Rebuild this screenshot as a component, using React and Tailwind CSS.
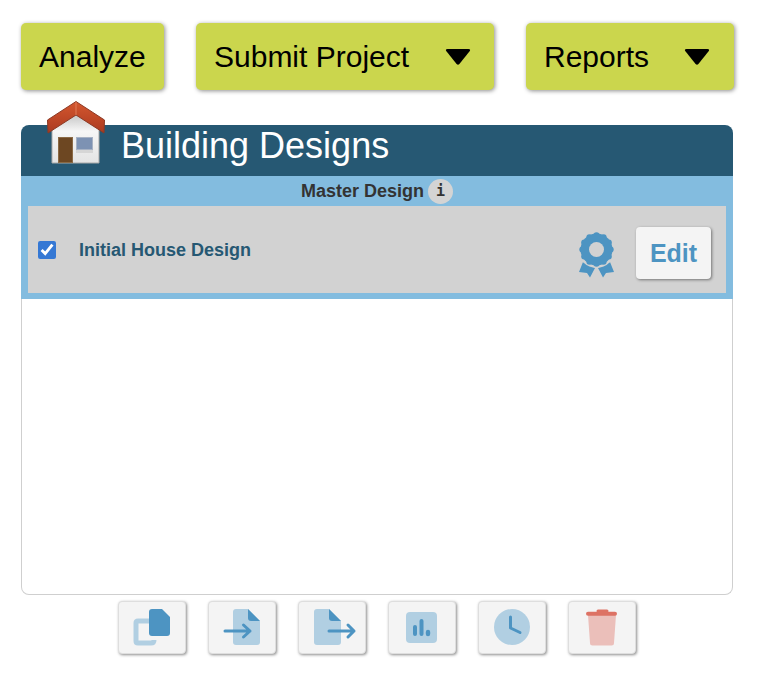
import { Fragment } from 'react'

const FONT = { fontFamily: '"Liberation Sans", Arial, sans-serif' }

function Caret() {
  return (
    <svg width="26" height="18" viewBox="0 0 26 18">
      <path d="M2.5 1 H23.5 Q25.8 1 24.8 3 L14.4 16 Q13 17.4 11.6 16 L1.2 3 Q0.2 1 2.5 1 Z" fill="#000" />
    </svg>
  )
}

function HouseIcon() {
  return (
    <svg width="58" height="64" viewBox="0 0 58 64">
      <defs>
        <linearGradient id="wall" x1="0" y1="0" x2="0" y2="1">
          <stop offset="0" stopColor="#c4c4c4" />
          <stop offset="0.35" stopColor="#f6f6f6" />
          <stop offset="1" stopColor="#e4e4e4" />
        </linearGradient>
        <linearGradient id="roof" x1="0" y1="0" x2="0" y2="1">
          <stop offset="0" stopColor="#d4572f" />
          <stop offset="1" stopColor="#ab3a20" />
        </linearGradient>
      </defs>
      <path d="M5 28 L29 13 L52 28 V62 H5 Z" fill="url(#wall)" stroke="#a9a9a9" strokeWidth="1" />
      <path d="M0.5 19 L29 0.5 L57.5 19 L57 32 L29 14 L1 32 Z" fill="url(#roof)" stroke="#8c3a25" strokeWidth="1" />
      <path d="M29 1 V14" stroke="#e07d58" strokeWidth="1" />
      <rect x="11.5" y="36.5" width="14" height="25" fill="#6d4722" stroke="#8b6a45" strokeWidth="1" />
      <rect x="29.5" y="36.5" width="16" height="12" fill="#7d92b3" stroke="#a7b2c4" strokeWidth="1" />
      <rect x="29" y="49" width="17" height="3" fill="#d6d6d6" />
    </svg>
  )
}

function RibbonIcon() {
  const bumps = Array.from({ length: 12 }, (_, i) => {
    const a = (i / 12) * Math.PI * 2
    return { cx: 17.5 + Math.cos(a) * 14.2, cy: 17.5 + Math.sin(a) * 14.2 }
  })
  return (
    <svg width="35" height="46" viewBox="0 0 35 46">
      <path d="M0 40 L4 30 L16 36 L11 45.5 L8 41 Z" fill="#4d94c2" />
      <path d="M35 40 L31 30 L19 36 L24 45.5 L27 41 Z" fill="#4d94c2" />
      <circle cx="17.5" cy="17.5" r="18.5" fill="#d2d2d2" />
      {bumps.map((b, i) => (
        <circle key={i} cx={b.cx} cy={b.cy} r="3" fill="#4d94c2" />
      ))}
      <circle cx="17.5" cy="17.5" r="16" fill="#4d94c2" />
      <circle cx="17.5" cy="17.5" r="7.5" fill="#d2d2d2" />
    </svg>
  )
}

const LIGHT = '#b1cfe2'
const DARK = '#4d94c2'

// coordinates are relative to the button's outer box
const ICONS = [
  <Fragment key="copy">
    <path d="M31 20 H20 Q18 20 18 22 V40 Q18 42 20 42 H33 Q36 42 36 39" fill="none" stroke={LIGHT} strokeWidth="5" />
    <path d="M34 8 H44 L52 16 V32 Q52 35 49 35 H34 Q31 35 31 32 V11 Q31 8 34 8 Z" fill={DARK} />
  </Fragment>,
  <Fragment key="import">
    <path d="M28 8 H40 L52 20 V41 Q52 44 49 44 H28 Q25 44 25 41 V11 Q25 8 28 8 Z" fill={LIGHT} />
    <path d="M40 8 L52 20 H43 Q40 20 40 17 Z" fill={DARK} />
    <path d="M17 30 H42 M35.5 24 L42 30 L35.5 36" fill="none" stroke={DARK} strokeWidth="3" strokeLinecap="round" strokeLinejoin="round" />
  </Fragment>,
  <Fragment key="export">
    <path d="M19 8 H31 L43 20 V41 Q43 44 40 44 H19 Q16 44 16 41 V11 Q16 8 19 8 Z" fill={LIGHT} />
    <path d="M31 8 L43 20 H34 Q31 20 31 17 Z" fill={DARK} />
    <path d="M31 30 H56 M50 24 L56 30 L50 36" fill="none" stroke={DARK} strokeWidth="3" strokeLinecap="round" strokeLinejoin="round" />
  </Fragment>,
  <Fragment key="chart">
    <rect x="18" y="11" width="31" height="31" rx="4" fill={LIGHT} />
    <path d="M27 26 V33 M33.5 20 V33" stroke={DARK} strokeWidth="4" strokeLinecap="round" />
    <path d="M40 31 V33" stroke={DARK} strokeWidth="4.4" strokeLinecap="round" />
  </Fragment>,
  <Fragment key="clock">
    <circle cx="34" cy="26" r="18" fill={LIGHT} />
    <path d="M32.5 16 V27 L42 31.5" fill="none" stroke={DARK} strokeWidth="3" strokeLinecap="round" strokeLinejoin="round" />
  </Fragment>,
  <Fragment key="trash">
    <path d="M20 14 H48 L46 42 Q46 44.5 43.5 44.5 H24.5 Q22 44.5 22 42 Z" fill="#ebbfba" />
    <path d="M20 12.8 H47" stroke="#dd7264" strokeWidth="4" strokeLinecap="round" />
    <path d="M30 10 H39" stroke="#dd7264" strokeWidth="3" strokeLinecap="round" />
  </Fragment>,
]

function ToolButton({ children }) {
  return (
    <button className="w-[68px] h-[53px] flex items-center justify-center rounded bg-[#f4f4f4] border border-[#dedede] shadow-[1px_1px_3px_rgba(0,0,0,0.45)]">
      <svg width="66" height="51" viewBox="1 1 66 51">{children}</svg>
    </button>
  )
}

export default function App() {
  return (
    <div className="w-[759px] h-[680px] bg-white pl-[21px] pt-[23px]" style={FONT}>
      <div className="flex text-[30px] text-black">
        <button className="w-[143px] h-[67px] flex items-center pl-[18px] rounded-[5px] bg-[#cbd64d] shadow-[1px_1px_4px_rgba(0,0,0,0.45)]">
          Analyze
        </button>
        <button className="w-[298px] h-[67px] ml-[32px] flex items-center justify-between pl-[18px] pr-[23px] rounded-[5px] bg-[#cbd64d] shadow-[1px_1px_4px_rgba(0,0,0,0.45)]">
          Submit Project
          <Caret />
        </button>
        <button className="w-[208px] h-[67px] ml-[32px] flex items-center justify-between pl-[18px] pr-[24px] rounded-[5px] bg-[#cbd64d] shadow-[1px_1px_4px_rgba(0,0,0,0.45)]">
          Reports
          <Caret />
        </button>
      </div>

      <div className="relative w-[712px] mt-[35px]">
        <div className="absolute left-[26px] top-[-24px]">
          <HouseIcon />
        </div>
        <div className="h-[51px] pl-[100px] pb-[10px] flex items-center rounded-t-[8px] bg-[#265873] text-white text-[36px]">
          Building Designs
        </div>
        <div className="h-[419px] rounded-b-[8px] border border-t-0 border-[#cfcfcf]">
          <div className="-mx-px bg-[#83bcdf] px-[7px] pb-[6px]">
            <div className="h-[30px] flex items-center justify-center gap-[4px] text-[#333] text-[18px] font-bold">
              Master Design
              <span
                className="w-[25px] h-[25px] flex items-center justify-center rounded-full bg-[#d4d4d4] text-[#333] text-[15px] font-bold"
                style={{ fontFamily: '"DejaVu Sans Mono", monospace' }}
              >
                i
              </span>
            </div>
            <div className="h-[87px] flex items-center bg-[#d2d2d2] pl-[10px] pr-[15px]">
              <input type="checkbox" defaultChecked className="w-[18px] h-[18px] accent-[#3578d4]" />
              <span className="ml-[23px] mt-[2px] text-[#265873] text-[18px] font-bold">Initial House Design</span>
              <div className="ml-auto mt-[11px]">
                <RibbonIcon />
              </div>
              <button className="ml-[22px] mt-[7px] w-[75px] h-[52px] pt-[2px] rounded bg-[#f4f4f4] text-[#4d94c2] text-[25px] font-bold shadow-[1px_1px_3px_rgba(0,0,0,0.45)]">
                Edit
              </button>
            </div>
          </div>
        </div>
      </div>

      <div className="flex gap-[22px] ml-[97px] mt-[6px]">
        {ICONS.map((icon, i) => (
          <ToolButton key={i}>{icon}</ToolButton>
        ))}
      </div>
    </div>
  )
}
